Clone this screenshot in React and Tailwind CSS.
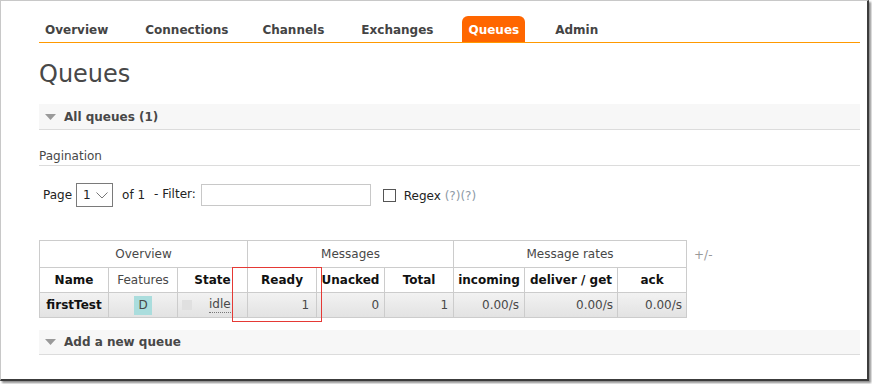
import React from "react";

const Tri = () => (
  <svg width="11" height="6" viewBox="0 0 11 6" className="shrink-0">
    <polygon points="0,0 11,0 5.5,6" fill="#9a9a9a" />
  </svg>
);

export default function App() {
  const nav = ["Overview", "Connections", "Channels", "Exchanges", "Queues", "Admin"];
  const navMl = [0, 25, 22, 25, 23, 24];
  return (
    <div className="w-[872px] h-[384px] bg-white relative overflow-hidden font-['DejaVu_Sans',sans-serif] text-[#484848]">
      <div className="w-[869px] h-[381px] border-l border-t border-[#c8c8c8] border-r-2 border-b-2 border-r-[#3c3c3c] border-b-[#3c3c3c] shadow-[2px_2px_2px_rgba(0,0,0,0.45)] pl-[38px] pr-[7px]">
        {/* nav */}
        <div className="mt-[15px] h-[27px] border-b border-[#ff9900] flex items-end">
          {nav.map((n, i) => (
            <div
              key={n}
              style={{ marginLeft: navMl[i] }}
              className={
                n === "Queues"
                  ? "h-[26px] pt-[2px] px-[6px] flex items-center rounded-t-[6px] bg-[#ff6600] text-white text-[12px] font-bold"
                  : "h-[26px] pt-[2px] px-[6px] flex items-center text-[12px] font-bold text-[#444]"
              }
            >
              {n}
            </div>
          ))}
        </div>
        {/* title */}
        <h1 className="mt-[17px] text-[24px] leading-[29px] font-normal text-[#484848]">Queues</h1>
        {/* all queues */}
        <div className="mt-[15px] h-[26px] bg-[#f7f7f7] border-b border-[#dcdcdc] flex items-center pl-[6px]">
          <Tri />
          <span className="ml-[8px] text-[12px] font-bold text-[#484848]">All queues (1)</span>
        </div>
        {/* pagination */}
        <div className="mt-[19px] text-[12px] leading-[14px] pb-[2px] border-b border-[#dcdcdc] text-[#484848]">Pagination</div>
        <div className="mt-[17px] h-[24px] flex items-center text-[12px] text-[#222]">
          <span className="ml-[4px]">Page</span>
          <div className="ml-[4px] w-[37px] h-[24px] border border-[#7a7a7a] flex items-center pl-[6px]">
            <span>1</span>
            <svg width="12" height="7" viewBox="0 0 12 7" className="ml-[5px]">
              <polyline points="0.5,0.5 6,6 11.5,0.5" fill="none" stroke="#777" strokeWidth="1" />
            </svg>
          </div>
          <span className="ml-[9px]">of 1</span>
          <span className="ml-[9px] relative top-[-1px]">- Filter:</span>
          <div className="ml-[5px] w-[170px] h-[22px] border border-[#c8c8c8] bg-white"></div>
          <div className="ml-[12px] w-[13px] h-[13px] border border-[#555] bg-white"></div>
          <span className="ml-[8px] relative top-[1px]">Regex <span className="text-[#8d9aa6]">(?)(?)</span></span>
        </div>
        {/* table */}
        <div className="mt-[33px] flex items-start">
          <table className="border-collapse table-fixed text-[12px] w-[647px]">
            <colgroup>
              <col className="w-[69px]" />
              <col className="w-[69px]" />
              <col className="w-[70px]" />
              <col className="w-[69px]" />
              <col className="w-[68px]" />
              <col className="w-[69px]" />
              <col className="w-[71px]" />
              <col className="w-[93px]" />
              <col className="w-[69px]" />
            </colgroup>
            <thead>
              <tr className="h-[27px]">
                <th colSpan={3} className="border border-[#cccccc] font-normal text-[#484848] p-0">Overview</th>
                <th colSpan={3} className="border border-[#cccccc] font-normal text-[#484848] p-0">Messages</th>
                <th colSpan={3} className="border border-[#cccccc] font-normal text-[#484848] p-0">Message rates</th>
              </tr>
              <tr className="h-[25px]">
                <th className="border border-[#cccccc] font-bold text-[#111] p-0">Name</th>
                <th className="border border-[#cccccc] font-normal text-[#484848] p-0">Features</th>
                <th className="border border-[#cccccc] font-bold text-[#111] p-0">State</th>
                <th className="border border-[#cccccc] font-bold text-[#111] p-0">Ready</th>
                <th className="border border-[#cccccc] font-bold text-[#111] p-0">Unacked</th>
                <th className="border border-[#cccccc] font-bold text-[#111] p-0">Total</th>
                <th className="border border-[#cccccc] font-bold text-[#111] p-0">incoming</th>
                <th className="border border-[#cccccc] font-bold text-[#111] p-0">deliver / get</th>
                <th className="border border-[#cccccc] font-bold text-[#111] p-0">ack</th>
              </tr>
            </thead>
            <tbody>
              <tr className="h-[25px] bg-gradient-to-b from-[#f2f2f2] to-[#e2e2e2] text-[#484848]">
                <td className="border border-[#cccccc] text-center font-bold text-[#111] p-0">firstTest</td>
                <td className="border border-[#cccccc] text-center p-0">
                  <span className="inline-block w-[18px] h-[19px] leading-[19px] bg-[#aadddd] text-center align-middle">D</span>
                </td>
                <td className="border border-[#cccccc] p-0">
                  <div className="flex items-center">
                    <span className="ml-[4px] w-[10px] h-[10px] bg-[#e0e0e0] inline-block"></span>
                    <span className="ml-[17px] border-b border-dotted border-[#777] leading-[15px]">idle</span>
                  </div>
                </td>
                <td className="border border-[#cccccc] text-right pr-[7px] p-0">1</td>
                <td className="border border-[#cccccc] text-right pr-[5px] p-0">0</td>
                <td className="border border-[#cccccc] text-right pr-[5px] p-0">1</td>
                <td className="border border-[#cccccc] text-right pr-[5px] p-0">0.00/s</td>
                <td className="border border-[#cccccc] text-right pr-[4px] p-0">0.00/s</td>
                <td className="border border-[#cccccc] text-right pr-[4px] p-0">0.00/s</td>
              </tr>
            </tbody>
          </table>
          <span className="ml-[7px] mt-[6px] text-[12px] text-[#999]">+/-</span>
        </div>
        {/* add new queue */}
        <div className="mt-[12px] h-[25px] bg-[#f7f7f7] border-b border-[#dcdcdc] flex items-center pl-[6px]">
          <Tri />
          <span className="ml-[8px] text-[12px] font-bold text-[#484848]">Add a new queue</span>
        </div>
      </div>
      {/* red highlight */}
      <div className="absolute left-[232px] top-[267px] w-[90px] h-[55px] border border-[#e53935]"></div>
    </div>
  );
}
